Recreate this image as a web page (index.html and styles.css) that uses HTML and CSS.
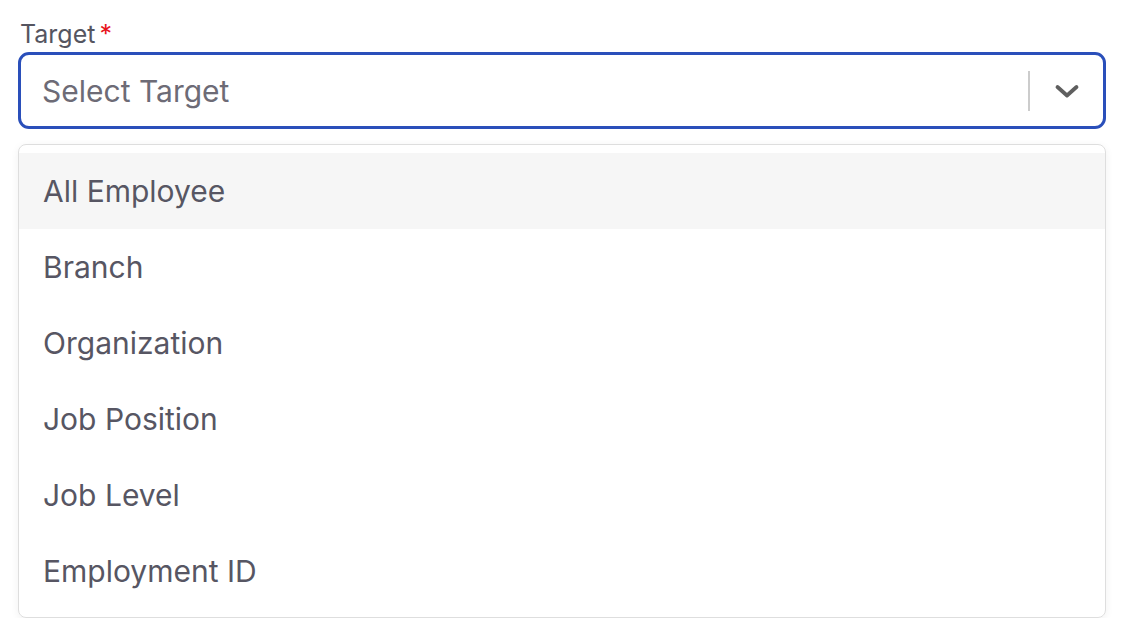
FILE: index.html
```html
<!DOCTYPE html>
<html lang="en">
<head>
    <meta charset="UTF-8">
    <meta name="viewport" content="width=device-width, initial-scale=1.0">
    <title>Target Select</title>
    <link rel="stylesheet" href="styles.css">
</head>
<body>
    <div class="field">
        <label class="field-label">Target<span class="required">*</span></label>
        <div class="select-control">
            <span class="placeholder">Select Target</span>
            <div class="indicators">
                <span class="separator"></span>
                <span class="chevron">
                    <svg width="26" height="24" viewBox="0 0 26 24" fill="none">
                        <path d="M3.5 8 L13 16.5 L22.5 8" stroke="#5f5f5f" stroke-width="3.8" stroke-linecap="round" stroke-linejoin="round"/>
                    </svg>
                </span>
            </div>
        </div>
        <ul class="menu">
            <li class="option focused">All Employee</li>
            <li class="option">Branch</li>
            <li class="option">Organization</li>
            <li class="option">Job Position</li>
            <li class="option">Job Level</li>
            <li class="option">Employment ID</li>
        </ul>
    </div>
</body>
</html>
```

FILE: styles.css
```css
/* Select field */
body, ul, li, label {
    margin: 0;
    padding: 0;
    box-sizing: border-box;
}

body {
    font-family: 'Inter', sans-serif;
    background-color: #ffffff;
    padding: 18px 15px 0 18px;
}

.field {
    width: 1088px;
}

.field-label {
    display: block;
    font-size: 25px;
    line-height: 32px;
    color: #555560;
    padding-left: 2px;
    margin-bottom: 2px;
}

.required {
    color: #e8141c;
    margin-left: 4px;
}

.select-control {
    height: 77px;
    border: 3px solid #2a4fba;
    border-radius: 11px;
    display: flex;
    align-items: center;
    justify-content: space-between;
    padding-left: 21px;
    box-sizing: border-box;
}

.placeholder {
    font-size: 30px;
    color: #6d6b76;
}

.indicators {
    display: flex;
    align-items: center;
    height: 100%;
}

.separator {
    width: 2px;
    height: 40px;
    background-color: #cccccc;
}

.chevron {
    display: flex;
    align-items: center;
    justify-content: center;
    width: 73px;
}

.menu {
    list-style: none;
    margin-top: 15px;
    border: 1px solid #dedede;
    border-radius: 8px;
    padding: 8px 0;
    box-shadow: 0 2px 8px rgba(0, 0, 0, 0.06);
}

.option {
    height: 76px;
    display: flex;
    align-items: center;
    padding-left: 24px;
    font-size: 30px;
    color: #575663;
}

.focused {
    background-color: #f6f6f6;
}
```
